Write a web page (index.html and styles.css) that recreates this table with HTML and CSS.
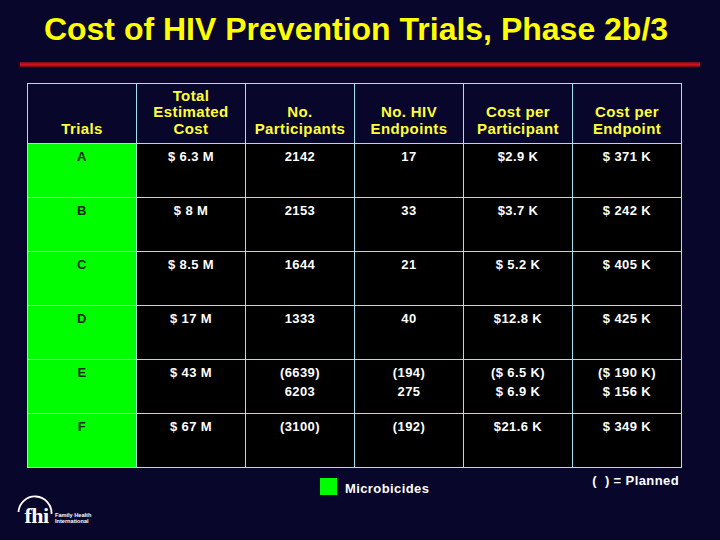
FILE: index.html
```html
<!DOCTYPE html>
<html lang="en">
<head>
<meta charset="utf-8">
<title>Cost of HIV Prevention Trials, Phase 2b/3</title>
<link rel="stylesheet" href="styles.css">
</head>
<body>
<div class="slide">
  <h1 class="title">Cost of HIV Prevention Trials, Phase 2b/3</h1>
  <div class="rule"></div>
  <table class="costs">
    <colgroup>
      <col class="c"><col class="c"><col class="c"><col class="c"><col class="c"><col class="c">
    </colgroup>
    <thead>
      <tr>
        <th>Trials</th>
        <th>Total<br>Estimated<br>Cost</th>
        <th>No.<br>Participants</th>
        <th>No. HIV<br>Endpoints</th>
        <th>Cost per<br>Participant</th>
        <th>Cost per<br>Endpoint</th>
      </tr>
    </thead>
    <tbody>
      <tr><td class="trial">A</td><td>$ 6.3 M</td><td>2142</td><td>17</td><td>$2.9 K</td><td>$ 371 K</td></tr>
      <tr><td class="trial">B</td><td>$ 8 M</td><td>2153</td><td>33</td><td>$3.7 K</td><td>$ 242 K</td></tr>
      <tr><td class="trial">C</td><td>$ 8.5 M</td><td>1644</td><td>21</td><td>$ 5.2 K</td><td>$ 405 K</td></tr>
      <tr><td class="trial">D</td><td>$ 17 M</td><td>1333</td><td>40</td><td>$12.8 K</td><td>$ 425 K</td></tr>
      <tr><td class="trial">E</td><td>$ 43 M</td><td>(6639)<br>6203</td><td>(194)<br>275</td><td>($ 6.5 K)<br>$ 6.9 K</td><td>($ 190 K)<br>$ 156 K</td></tr>
      <tr><td class="trial">F</td><td>$ 67 M</td><td>(3100)</td><td>(192)</td><td>$21.6 K</td><td>$ 349 K</td></tr>
    </tbody>
  </table>
  <div class="footer">
    <div class="logo">
      <svg width="80" height="34" viewBox="0 0 80 34">
        <path d="M3.5 19 A16.5 16.5 0 0 1 36.5 21" fill="none" stroke="#ffffff" stroke-width="1.8"/>
        <text x="9.5" y="30" class="logo-fhi">fhi</text>
        <text x="40" y="23.5" class="logo-small">Family Health</text>
        <text x="40" y="29.5" class="logo-small">International</text>
      </svg>
    </div>
    <div class="legend">
      <span class="swatch"></span>
      <span class="legend-label">Microbicides</span>
    </div>
    <div class="planned">(&nbsp;&nbsp;) = Planned</div>
  </div>
</div>
</body>
</html>
```
FILE: styles.css
```css
html, body {
  margin: 0;
  padding: 0;
  background: #08062b;
}

.slide {
  width: 720px;
  height: 540px;
  overflow: hidden;
  background: #08062b;
  font-family: "Liberation Sans", Arial, sans-serif;
  display: flex;
  flex-direction: column;
}

.title {
  margin: 0;
  padding: 10px 8px 0 0;
  font-size: 32px;
  line-height: 38px;
  font-weight: bold;
  color: #ffff00;
  text-align: center;
}

.rule {
  margin: 14px 0 0 20px;
  width: 680px;
  height: 5px;
  background: linear-gradient(to bottom, #6e0818 0%, #d2141f 45%, #c3121e 60%, #6e0818 100%);
}

.costs {
  margin: 16px 0 0 27px;
  width: 655px;
  table-layout: fixed;
  border-collapse: collapse;
  font-weight: bold;
}

.costs .c {
  width: 109px;
}

.costs th,
.costs td {
  border: 1px solid #9fe3ee;
  text-align: center;
  padding: 0;
}

.costs th {
  height: 53px;
  vertical-align: bottom;
  padding-bottom: 6px;
  color: #ffff3a;
  background: #08062b;
  font-size: 15px;
  line-height: 16.5px;
  letter-spacing: 0.4px;
}

.costs td {
  height: 50px;
  vertical-align: top;
  padding-top: 3px;
  background: #000000;
  color: #ffffff;
  font-size: 13px;
  line-height: 19px;
  letter-spacing: 0.4px;
}

.costs td.trial {
  background: #00fe00;
  color: #0b2a0b;
}

.footer {
  display: flex;
  align-items: flex-start;
  flex: 1;
}

.logo {
  margin: 25px 0 0 15px;
  width: 80px;
  height: 34px;
}

.logo svg {
  display: block;
}

.logo-fhi {
  font-family: "Liberation Serif", "Times New Roman", serif;
  font-weight: bold;
  font-size: 22px;
  fill: #ffffff;
  letter-spacing: -0.5px;
}

.logo-small {
  font-family: "Liberation Sans", Arial, sans-serif;
  font-weight: bold;
  font-size: 5.6px;
  fill: #ffffff;
}

.legend {
  margin: 10px 0 0 225px;
  display: flex;
  align-items: flex-start;
  gap: 8px;
}

.swatch {
  width: 17px;
  height: 17px;
  background: #00fe00;
}

.legend-label {
  color: #ffffff;
  font-size: 13px;
  font-weight: bold;
  letter-spacing: 0.4px;
  padding-top: 3px;
}

.planned {
  margin: 5px 41px 0 auto;
  color: #ffffff;
  font-size: 13px;
  font-weight: bold;
  letter-spacing: 0.4px;
}
```
